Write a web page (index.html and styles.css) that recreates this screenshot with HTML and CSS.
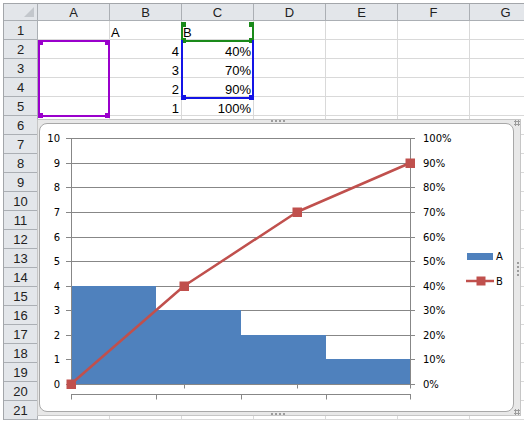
FILE: index.html
```html
<!DOCTYPE html>
<html>
<head>
<meta charset="utf-8">
<link rel="stylesheet" href="styles.css">
</head>
<body>
<div class="page">
  <div class="sheet">
    <div class="corner"><span class="tri"></span></div>
    <div class="colh">A</div><div class="colh">B</div><div class="colh">C</div><div class="colh">D</div><div class="colh">E</div><div class="colh">F</div><div class="colh">G</div>

    <div class="rowh">1</div><div class="c"></div><div class="c">A</div><div class="c">B</div><div class="c"></div><div class="c"></div><div class="c"></div><div class="c"></div>
    <div class="rowh">2</div><div class="c"></div><div class="c r">4</div><div class="c r">40%</div><div class="c"></div><div class="c"></div><div class="c"></div><div class="c"></div>
    <div class="rowh">3</div><div class="c"></div><div class="c r">3</div><div class="c r">70%</div><div class="c"></div><div class="c"></div><div class="c"></div><div class="c"></div>
    <div class="rowh">4</div><div class="c"></div><div class="c r">2</div><div class="c r">90%</div><div class="c"></div><div class="c"></div><div class="c"></div><div class="c"></div>
    <div class="rowh">5</div><div class="c"></div><div class="c r">1</div><div class="c r">100%</div><div class="c"></div><div class="c"></div><div class="c"></div><div class="c"></div>
    <div class="rowh">6</div><div class="c"></div><div class="c"></div><div class="c"></div><div class="c"></div><div class="c"></div><div class="c"></div><div class="c"></div>
    <div class="rowh">7</div><div class="c"></div><div class="c"></div><div class="c"></div><div class="c"></div><div class="c"></div><div class="c"></div><div class="c"></div>
    <div class="rowh">8</div><div class="c"></div><div class="c"></div><div class="c"></div><div class="c"></div><div class="c"></div><div class="c"></div><div class="c"></div>
    <div class="rowh">9</div><div class="c"></div><div class="c"></div><div class="c"></div><div class="c"></div><div class="c"></div><div class="c"></div><div class="c"></div>
    <div class="rowh">10</div><div class="c"></div><div class="c"></div><div class="c"></div><div class="c"></div><div class="c"></div><div class="c"></div><div class="c"></div>
    <div class="rowh">11</div><div class="c"></div><div class="c"></div><div class="c"></div><div class="c"></div><div class="c"></div><div class="c"></div><div class="c"></div>
    <div class="rowh">12</div><div class="c"></div><div class="c"></div><div class="c"></div><div class="c"></div><div class="c"></div><div class="c"></div><div class="c"></div>
    <div class="rowh">13</div><div class="c"></div><div class="c"></div><div class="c"></div><div class="c"></div><div class="c"></div><div class="c"></div><div class="c"></div>
    <div class="rowh">14</div><div class="c"></div><div class="c"></div><div class="c"></div><div class="c"></div><div class="c"></div><div class="c"></div><div class="c"></div>
    <div class="rowh">15</div><div class="c"></div><div class="c"></div><div class="c"></div><div class="c"></div><div class="c"></div><div class="c"></div><div class="c"></div>
    <div class="rowh">16</div><div class="c"></div><div class="c"></div><div class="c"></div><div class="c"></div><div class="c"></div><div class="c"></div><div class="c"></div>
    <div class="rowh">17</div><div class="c"></div><div class="c"></div><div class="c"></div><div class="c"></div><div class="c"></div><div class="c"></div><div class="c"></div>
    <div class="rowh">18</div><div class="c"></div><div class="c"></div><div class="c"></div><div class="c"></div><div class="c"></div><div class="c"></div><div class="c"></div>
    <div class="rowh">19</div><div class="c"></div><div class="c"></div><div class="c"></div><div class="c"></div><div class="c"></div><div class="c"></div><div class="c"></div>
    <div class="rowh">20</div><div class="c"></div><div class="c"></div><div class="c"></div><div class="c"></div><div class="c"></div><div class="c"></div><div class="c"></div>
    <div class="rowh">21</div><div class="c"></div><div class="c"></div><div class="c"></div><div class="c"></div><div class="c"></div><div class="c"></div><div class="c"></div>
  </div>

  <div class="sel sel-purple">
    <span class="h h-tl"></span><span class="h h-tr"></span><span class="h h-bl"></span><span class="h h-br"></span>
  </div>
  <div class="sel sel-green">
    <span class="h h-tl"></span><span class="h h-tr"></span><span class="h h-bl"></span><span class="h h-br"></span>
  </div>
  <div class="sel sel-blue">
    <span class="h h-bl"></span><span class="h h-br"></span>
  </div>

  <div class="chart">
    <div class="card"></div>
    <span class="grip grip-top"></span>
    <span class="grip grip-bottom"></span>
    <span class="grip grip-right"></span>
    <span class="grip grip-tr"></span>
    <span class="grip grip-br"></span>
  </div>

  <svg class="plot" viewBox="0 0 524 422" width="524" height="422">
    <g class="grid">
      <line x1="66" y1="138.5" x2="415" y2="138.5"/>
      <line x1="66" y1="163.5" x2="415" y2="163.5"/>
      <line x1="66" y1="187.5" x2="415" y2="187.5"/>
      <line x1="66" y1="212.5" x2="415" y2="212.5"/>
      <line x1="66" y1="237.5" x2="415" y2="237.5"/>
      <line x1="66" y1="261.5" x2="415" y2="261.5"/>
      <line x1="66" y1="286.5" x2="415" y2="286.5"/>
      <line x1="66" y1="310.5" x2="415" y2="310.5"/>
      <line x1="66" y1="335.5" x2="415" y2="335.5"/>
      <line x1="66" y1="359.5" x2="415" y2="359.5"/>
    </g>
    <g class="bars">
      <rect x="72" y="286" width="84" height="98"/>
      <rect x="156" y="310" width="85" height="74"/>
      <rect x="241" y="335" width="85" height="49"/>
      <rect x="326" y="359" width="84" height="25"/>
    </g>
    <g class="grid">
      <line x1="71.5" y1="138" x2="71.5" y2="385"/>
      <line x1="410.5" y1="138" x2="410.5" y2="388.5"/>
      <line x1="66" y1="384.5" x2="415" y2="384.5"/>
      <line x1="184.5" y1="384" x2="184.5" y2="388.5"/>
      <line x1="297.5" y1="384" x2="297.5" y2="388.5"/>
      <line x1="71" y1="394.5" x2="411" y2="394.5"/>
      <line x1="71.5" y1="394" x2="71.5" y2="399.5"/>
      <line x1="156.5" y1="394" x2="156.5" y2="399.5"/>
      <line x1="241.5" y1="394" x2="241.5" y2="399.5"/>
      <line x1="326.5" y1="394" x2="326.5" y2="399.5"/>
      <line x1="410.5" y1="394" x2="410.5" y2="399.5"/>
    </g>
    <polyline class="series-b" points="71,384 184,286 297,212 410,163"/>
    <g class="markers">
      <rect x="66.5" y="379.5" width="9.5" height="9.5"/>
      <rect x="179.5" y="281.5" width="9.5" height="9.5"/>
      <rect x="292.5" y="207.5" width="9.5" height="9.5"/>
      <rect x="405.5" y="158.5" width="9.5" height="9.5"/>
    </g>
    <g class="lbl lbl-left">
      <text x="60" y="142">10</text>
      <text x="60" y="167">9</text>
      <text x="60" y="191">8</text>
      <text x="60" y="216">7</text>
      <text x="60" y="241">6</text>
      <text x="60" y="265">5</text>
      <text x="60" y="290">4</text>
      <text x="60" y="314">3</text>
      <text x="60" y="339">2</text>
      <text x="60" y="363">1</text>
      <text x="60" y="388">0</text>
    </g>
    <g class="lbl">
      <text x="423" y="142">100%</text>
      <text x="423" y="167">90%</text>
      <text x="423" y="191">80%</text>
      <text x="423" y="216">70%</text>
      <text x="423" y="241">60%</text>
      <text x="423" y="265">50%</text>
      <text x="423" y="290">40%</text>
      <text x="423" y="314">30%</text>
      <text x="423" y="339">20%</text>
      <text x="423" y="363">10%</text>
      <text x="423" y="388">0%</text>
    </g>
    <g class="legend">
      <rect class="leg-a" x="467" y="253" width="26" height="7"/>
      <text x="496" y="260">A</text>
      <line class="series-b" x1="466" y1="281" x2="494" y2="281"/>
      <rect class="leg-mk" x="476.5" y="276.5" width="9" height="9"/>
      <text x="496" y="285">B</text>
    </g>
  </svg>
</div>
</body>
</html>
```

FILE: styles.css
```css
html, body {
  margin: 0;
  padding: 0;
  background: #ffffff;
}

body {
  font-family: "Liberation Sans", Arial, sans-serif;
  color: #000;
}

.page {
  position: relative;
  width: 524px;
  height: 422px;
  overflow: hidden;
  background: #ffffff;
}

.sheet {
  margin: 3px 0 0 3px;
  display: grid;
  grid-template-columns: 34px repeat(7, 72px);
  grid-template-rows: 17px repeat(21, 19px);
  width: max-content;
  border-top: 1px solid #a3a6aa;
  border-left: 1px solid #a3a6aa;
}

.corner,
.colh,
.rowh {
  box-sizing: border-box;
  background: #e3e6ea;
  border-right: 1px solid #abafb4;
  border-bottom: 1px solid #abafb4;
  display: flex;
  align-items: center;
  justify-content: center;
  font-size: 13px;
  line-height: 13px;
  color: #222;
}

.corner {
  position: relative;
}

.tri {
  position: absolute;
  right: 3px;
  bottom: 3px;
  width: 0;
  height: 0;
  border-left: 10px solid transparent;
  border-bottom: 10px solid #c3c7cc;
}

.c {
  box-sizing: border-box;
  border-right: 1px solid #d9d9d9;
  border-bottom: 1px solid #d9d9d9;
  display: flex;
  align-items: flex-end;
  justify-content: flex-start;
  padding: 0 2px 0 1px;
  font-size: 13px;
  line-height: 13px;
}

.c.r {
  justify-content: flex-end;
}

/* range highlight boxes */
.sel {
  position: absolute;
  box-sizing: border-box;
}

.sel-purple {
  left: 38px;
  top: 40px;
  width: 72px;
  height: 77px;
  border: 2px solid #9a00cc;
}

.sel-green {
  left: 181px;
  top: 22px;
  width: 73px;
  height: 20px;
  border-left: 2px solid #1a8a1a;
  border-right: 2px solid #1a8a1a;
  border-bottom: 2px solid #1a8a1a;
}

.sel-blue {
  left: 181px;
  top: 40px;
  width: 73px;
  height: 59px;
  border-left: 2px solid #1414e6;
  border-right: 2px solid #1414e6;
  border-bottom: 2px solid #1414e6;
}

.h {
  position: absolute;
  width: 5px;
  height: 5px;
}

.sel-purple .h { background: #9a00cc; }
.sel-green .h { background: #1a8a1a; }
.sel-blue .h { background: #1414e6; }

.h-tl { left: -2px; top: -2px; }
.h-tr { right: -2px; top: -2px; }
.h-bl { left: -2px; bottom: -3px; }
.h-br { right: -2px; bottom: -3px; }

.sel-green .h-tl,
.sel-green .h-tr { top: 0; }

/* chart object */
.chart {
  position: absolute;
  left: 37px;
  top: 119px;
  width: 484px;
  height: 297px;
  box-sizing: border-box;
  background: #e8e8e8;
  border: 1px solid #c6c6c6;
  padding: 3px 6px 3px 1px;
}

.card {
  height: 100%;
  box-sizing: border-box;
  background: #ffffff;
  border: 1px solid #a8a8a8;
  border-radius: 8px;
}

.grip {
  position: absolute;
  background-image: linear-gradient(90deg, #9c9c9c 2px, transparent 2px);
  background-size: 4px 2px;
}

.grip-top {
  left: 233px;
  top: 0;
  width: 14px;
  height: 2px;
}

.grip-bottom {
  left: 233px;
  bottom: 0;
  width: 14px;
  height: 2px;
}

.grip-right {
  right: 1px;
  top: 142px;
  width: 2px;
  height: 14px;
  background-image: linear-gradient(180deg, #9c9c9c 2px, transparent 2px);
  background-size: 2px 4px;
}

.grip-tr,
.grip-br {
  right: 0;
  width: 6px;
  height: 6px;
  background-image: radial-gradient(circle, #9c9c9c 1px, transparent 1.2px);
  background-size: 3px 3px;
}

.grip-tr { top: 0; }
.grip-br { bottom: 0; }

/* chart drawing */
.plot {
  position: absolute;
  left: 0;
  top: 0;
  pointer-events: none;
}

.grid line {
  stroke: #878787;
  stroke-width: 1;
}

.bars rect,
.leg-a {
  fill: #4f81bd;
}

.series-b {
  fill: none;
  stroke: #c0504d;
  stroke-width: 2.5;
  stroke-linejoin: round;
}

.markers rect,
.leg-mk {
  fill: #c0504d;
}

.lbl text,
.legend text {
  font-family: "DejaVu Sans", sans-serif;
  font-size: 10px;
  fill: #000;
}

.lbl-left text {
  text-anchor: end;
}
```
